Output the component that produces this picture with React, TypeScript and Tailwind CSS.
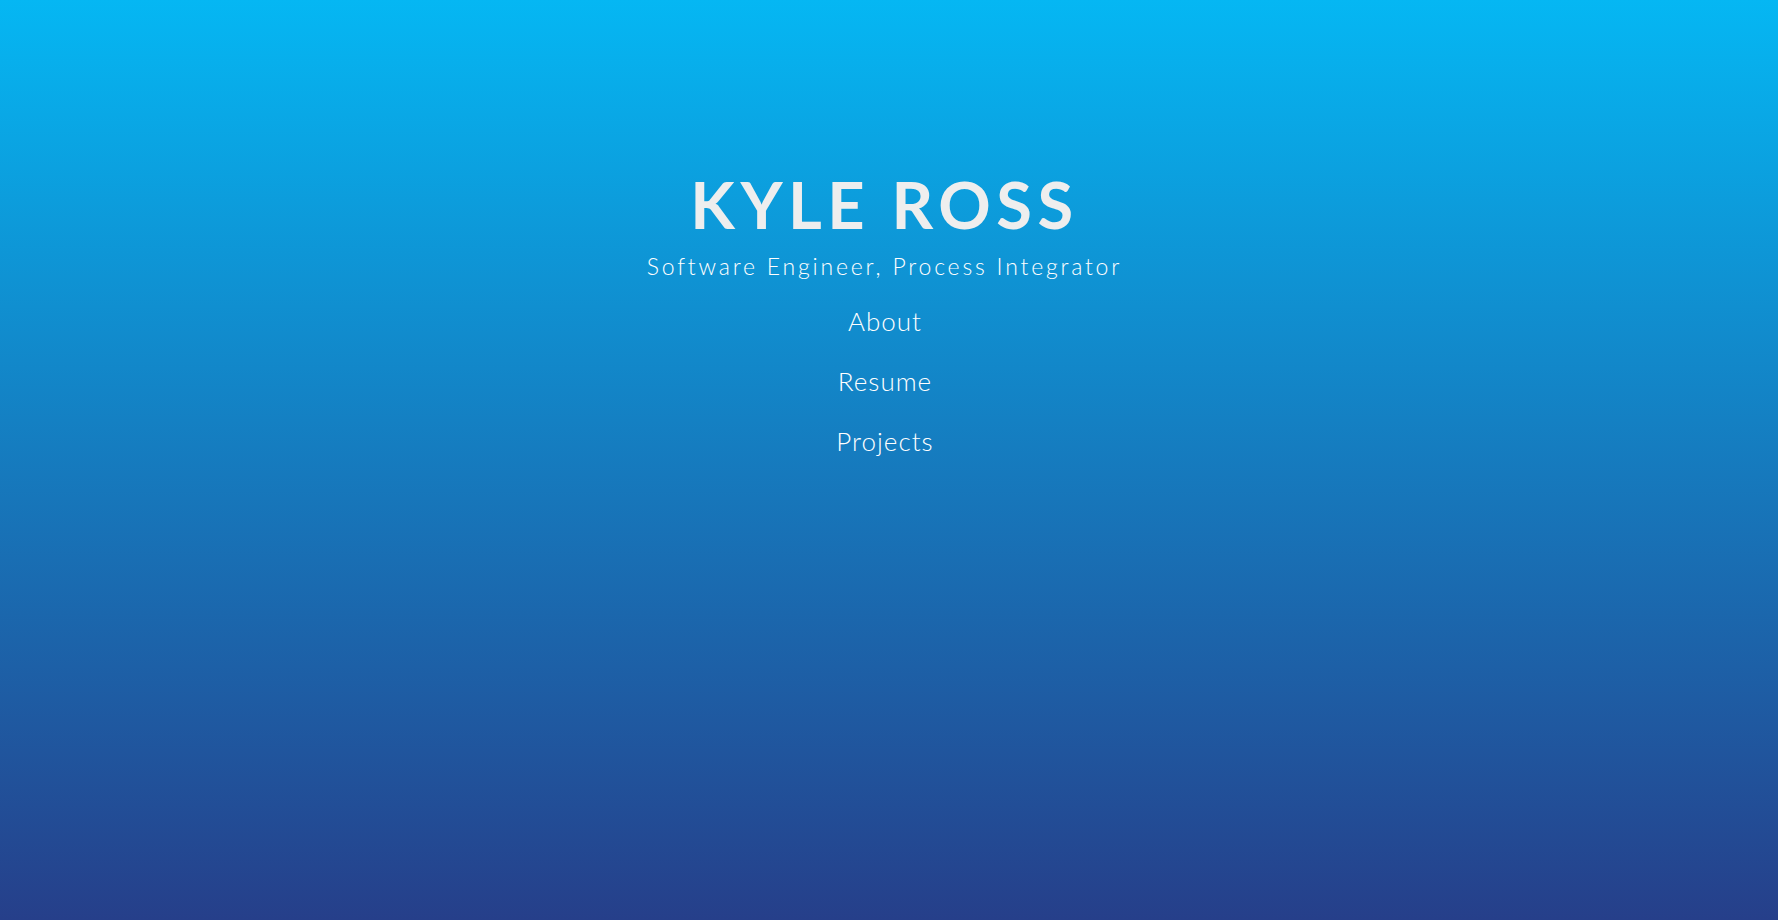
export default function App() {
  const links = ["About", "Resume", "Projects"];
  return (
    <div
      className="flex min-h-screen w-full flex-col items-center bg-[linear-gradient(to_bottom,#05b7f3,#263f8a)] pt-[172px] pr-[9px] text-white"
      style={{ fontFamily: "Lato, 'Noto Sans', sans-serif" }}
    >
      <h1 className="text-[65px] leading-none font-bold tracking-[0.085em] text-[#eeeeee]">
        KYLE ROSS
      </h1>
      <p className="mt-[18px] text-[23px] leading-none font-light tracking-[2.8px]">
        Software Engineer, Process Integrator
      </p>
      <nav className="mt-[30px] flex flex-col items-center gap-[34px]">
        {links.map((l) => (
          <a key={l} href="#" className="pl-[1px] text-[26px] leading-[26px] font-light tracking-[1px]">
            {l}
          </a>
        ))}
      </nav>
    </div>
  );
}
